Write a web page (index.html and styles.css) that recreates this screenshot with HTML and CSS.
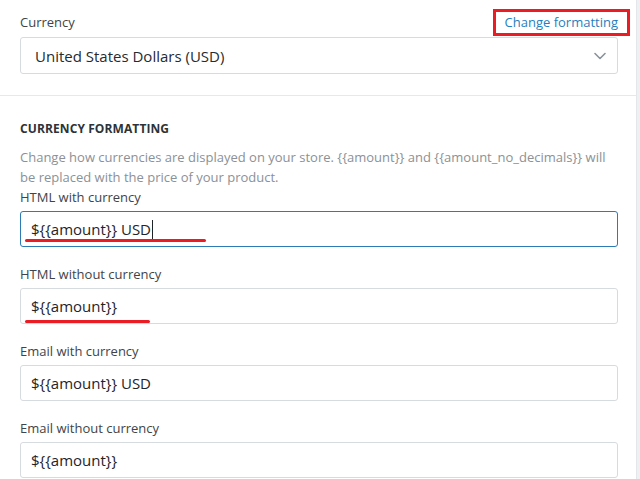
FILE: index.html
```html
<!DOCTYPE html>
<html lang="en">
<head>
<meta charset="utf-8">
<title>Currency formatting</title>
<link rel="stylesheet" href="styles.css">
</head>
<body>
<div class="page">
  <main class="card">
    <section class="section section-top">
      <div class="row">
        <label class="label">Currency</label>
        <a class="link" href="#">Change formatting</a>
      </div>
      <div class="select">
        <span class="select-text">United States Dollars (USD)</span>
        <svg class="chevron" width="12" height="8" viewBox="0 0 12 8" aria-hidden="true">
          <path d="M1 1.5 L6 6.5 L11 1.5" fill="none" stroke="#8a939b" stroke-width="1.6" stroke-linecap="round" stroke-linejoin="round"/>
        </svg>
      </div>
    </section>
    <section class="section section-format">
      <h2 class="heading">CURRENCY FORMATTING</h2>
      <p class="desc">Change how currencies are displayed on your store. {{amount}} and {{amount_no_decimals}} will be replaced with the price of your product.</p>
      <div class="field field-first">
        <label class="label">HTML with currency</label>
        <div class="input focused mark mark-long">${{amount}} USD<span class="caret"></span></div>
      </div>
      <div class="field">
        <label class="label">HTML without currency</label>
        <div class="input mark mark-short">${{amount}}</div>
      </div>
      <div class="field">
        <label class="label">Email with currency</label>
        <div class="input">${{amount}} USD</div>
      </div>
      <div class="field">
        <label class="label">Email without currency</label>
        <div class="input">${{amount}}</div>
      </div>
    </section>
  </main>
  <div class="gutter"></div>
</div>
</body>
</html>
```

FILE: styles.css
```css
html, body {
  margin: 0;
  padding: 0;
}
body {
  background: #f4f6f8;
  font-family: "Open Sans", "Noto Sans", sans-serif;
  color: #333a40;
  overflow: hidden;
}
.page {
  display: flex;
  height: 479px;
}
.card {
  width: 636px;
  background: #ffffff;
  flex: none;
}
.gutter {
  flex: 1;
  background: #eef0f2;
  border-left: 1px solid #e4e7ea;
}
.section {
  padding: 0 18px 0 20px;
}
.section-top {
  padding-top: 12px;
  padding-bottom: 21px;
  border-bottom: 1px solid #e6e8eb;
}
.row {
  display: flex;
  justify-content: space-between;
  align-items: center;
  height: 20px;
}
.label {
  display: block;
  font-size: 13px;
  line-height: 20px;
  color: #3e4449;
}
.link {
  position: relative;
  font-size: 13px;
  line-height: 20px;
  color: #1f7fc0;
  text-decoration: none;
}
.link::after {
  content: "";
  position: absolute;
  left: -12px;
  right: -12px;
  top: -3px;
  bottom: -4px;
  border: 3px solid #ec1c24;
}
.select {
  margin-top: 5px;
  height: 37px;
  box-sizing: border-box;
  border: 1px solid #d6dbdf;
  border-radius: 3px;
  display: flex;
  align-items: center;
  justify-content: space-between;
  padding: 0 11px 0 14px;
}
.select-text {
  font-size: 15px;
  color: #262b30;
}
.chevron {
  display: block;
}
.section-format {
  padding-top: 24px;
}
.heading {
  margin: 0;
  font-size: 12px;
  line-height: 17px;
  font-weight: 700;
  color: #2d3338;
  letter-spacing: 0.1px;
}
.desc {
  margin: 10px 0 0;
  font-size: 13px;
  line-height: 20px;
  color: #8b9196;
}
.field {
  margin-top: 17px;
}
.field-first {
  margin-top: 0;
}
.field .label {
  margin-bottom: 4px;
}
.input {
  position: relative;
  height: 36px;
  box-sizing: border-box;
  border: 1px solid #d6dbdf;
  border-radius: 3px;
  padding: 0 10px;
  display: flex;
  align-items: center;
  font-size: 15px;
  color: #1f2428;
}
.input.focused {
  border-color: #2c7bb5;
}
.caret {
  display: inline-block;
  width: 1px;
  height: 19px;
  background: #1f2428;
  margin-left: 1px;
}
.mark::after {
  content: "";
  position: absolute;
  left: 4px;
  height: 3px;
  border-radius: 2px;
  background: #ea1c24;
}
.mark-long::after {
  top: 27px;
  width: 181px;
}
.mark-short::after {
  top: 31px;
  width: 125px;
}
```
